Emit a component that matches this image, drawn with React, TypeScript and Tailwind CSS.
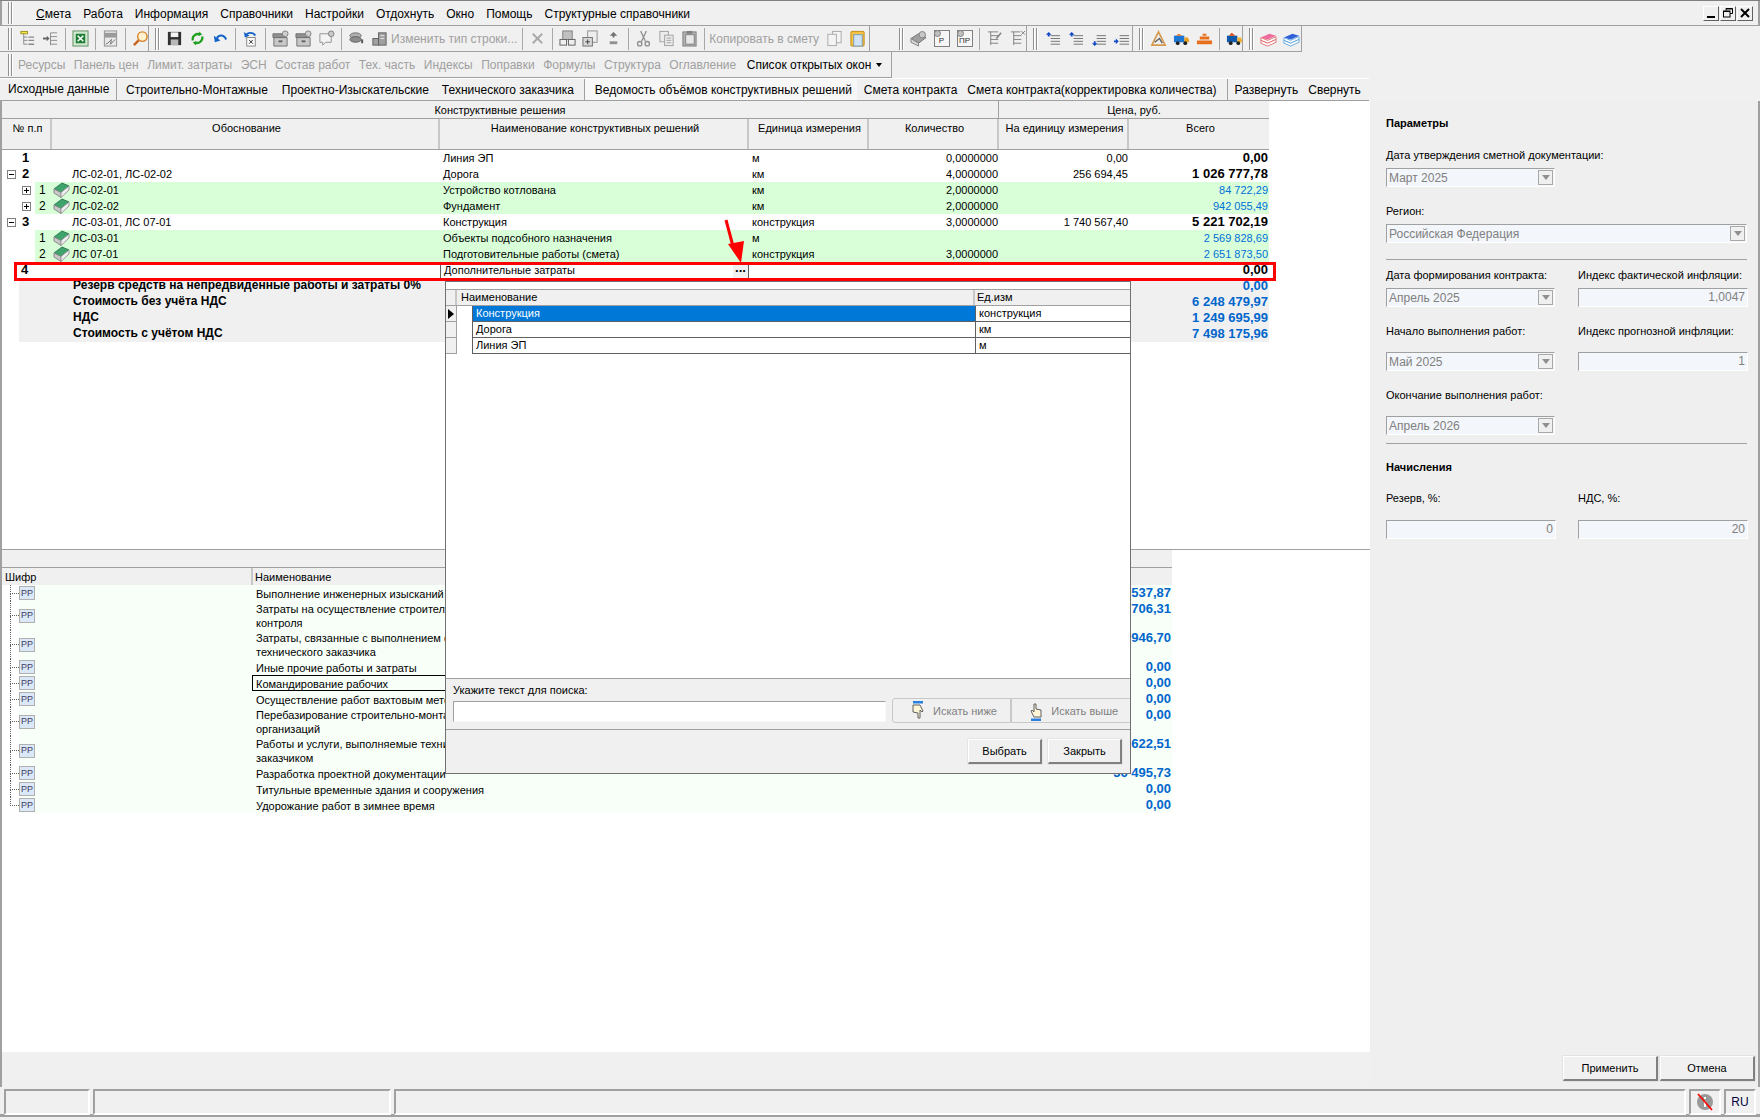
import type { ReactNode } from "react";

const COLS = "grid grid-cols-[50px_388px_309px_120px_130px_130px_140px]";

function Grip() {
  return (
    <div className="flex gap-[1px] ml-[6px] mr-[3px] shrink-0 h-[22px]">
      <div className="w-[2px] border-l border-[#909090] border-r border-r-white" />
      <div className="w-[2px] border-l border-[#909090] border-r border-r-white" />
    </div>
  );
}

function Sep() {
  return <div className="w-px h-[22px] bg-[#a8a8a8] mx-[3px] shrink-0" />;
}

function Ico({ children, w = "w-[23px]" }: { children: ReactNode; w?: string }) {
  return (
    <div className={`${w} h-[24px] flex items-center justify-center shrink-0`}>
      <svg width="17" height="17" viewBox="0 0 18 18">
        {children}
      </svg>
    </div>
  );
}

const TreeA = (
  <g fill="none" stroke="#8a8a8a">
    <rect x="2" y="1.5" width="7" height="2.5" fill="#f5e642" stroke="#a09020" />
    <path d="M5 4v11M5 7.5h4M5 11h4M5 15h4" />
    <path d="M10 7.5h6M10 11h6M10 15h6" strokeWidth="1.5" />
  </g>
);
const TreeB = (
  <g fill="none" stroke="#8a8a8a">
    <path d="M1 9h5" stroke="#606060" strokeWidth="2" />
    <path d="M5 6l3 3-3 3" fill="#606060" stroke="none" />
    <path d="M9 3v13M9 3h7M9 7h7M9 11h7M9 15h7" />
  </g>
);
const Excel = (
  <g>
    <rect x="1" y="1" width="16" height="16" fill="#cfe8cf" stroke="#5f8f5f" />
    <rect x="4" y="4" width="10" height="10" fill="#1e7e34" />
    <path d="M6 6l6 6M12 6l-6 6" stroke="#fff" strokeWidth="1.6" />
  </g>
);
const Pdf = (
  <g>
    <rect x="2.5" y="1" width="13" height="16" fill="#e8e8e8" stroke="#909090" />
    <rect x="2.5" y="3" width="13" height="5" fill="#9a9a9a" />
    <path d="M4 15c3-1 5-4 6-5l-1 5 5-5" stroke="#707070" fill="none" />
  </g>
);
const Find = (
  <g>
    <circle cx="11" cy="7" r="5" fill="#fff2cc" stroke="#d9822b" strokeWidth="1.5" />
    <path d="M7 11l-5 5" stroke="#c9641c" strokeWidth="2.5" />
  </g>
);
const Save = (
  <g>
    <rect x="2" y="2" width="14" height="14" fill="#303030" />
    <rect x="5" y="2.5" width="8" height="5" fill="#f4f4f4" />
    <rect x="5" y="10" width="8" height="6" fill="#b8b8b8" />
  </g>
);
const Refresh = (
  <g fill="none" stroke="#22a022" strokeWidth="2.4">
    <path d="M4 11a5.5 5.5 0 0 1 8-6" />
    <path d="M14 7a5.5 5.5 0 0 1-8 6" />
    <path d="M11 1.5l3 3.5-4 1z" fill="#22a022" stroke="none" />
    <path d="M7 16.5l-3-3.5 4-1z" fill="#22a022" stroke="none" />
  </g>
);
const Undo = (
  <g>
    <path d="M5 10c1-5 7-6 10 0" fill="none" stroke="#1464c8" strokeWidth="2.2" />
    <path d="M2 6l1 7 6-2z" fill="#1464c8" />
  </g>
);
const Undo2 = (
  <g>
    <path d="M4 6c2-4 8-4 10 0" fill="none" stroke="#1464c8" strokeWidth="2" />
    <path d="M2 2l1 6 5-2z" fill="#1464c8" />
    <rect x="5" y="8" width="9" height="9" fill="#fff" stroke="#808080" />
    <path d="M7.5 10.5l4 4M11.5 10.5l-4 4" stroke="#202020" />
  </g>
);
const Box = (
  <g>
    <path d="M2 8h14v9H2z" fill="#c8c8c8" stroke="#707070" />
    <path d="M1 4h12v4H1z" fill="#909090" stroke="#707070" />
    <circle cx="14" cy="4" r="3" fill="#d0d0d0" stroke="#808080" />
    <path d="M7 11h4v2H7z" fill="#606060" />
  </g>
);
const Bubble = (
  <g>
    <path d="M2 4h12v9H8l-3 3v-3H2z" fill="#f4f4f4" stroke="#909090" />
    <circle cx="14" cy="4" r="3" fill="#c8c8c8" stroke="#808080" />
  </g>
);
const Stack = (
  <g>
    <ellipse cx="8" cy="6" rx="6" ry="3" fill="#b0b0b0" stroke="#707070" />
    <ellipse cx="8" cy="10" rx="6" ry="3" fill="#8c8c8c" stroke="#606060" />
    <path d="M15 10v4" stroke="#505050" strokeWidth="2" />
  </g>
);
const Blocks = (
  <g fill="#a0a0a0" stroke="#606060">
    <rect x="2" y="9" width="6" height="7" />
    <rect x="8" y="3" width="8" height="13" />
    <path d="M10 6h4M10 9h4" stroke="#e8e8e8" />
  </g>
);
const Cross = <path d="M4 4l10 10M14 4L4 14" stroke="#a8a8a8" strokeWidth="2" />;
const Calc = (
  <g>
    <rect x="4" y="1" width="10" height="9" fill="#c0c0c0" stroke="#808080" />
    <rect x="1" y="10" width="7" height="6" fill="#f0f0f0" stroke="#606060" />
    <rect x="10" y="10" width="7" height="6" fill="#f0f0f0" stroke="#606060" />
  </g>
);
const DocPlus = (
  <g>
    <rect x="6" y="1" width="10" height="12" fill="#eee" stroke="#909090" />
    <rect x="1" y="8" width="10" height="9" fill="#d8d8d8" stroke="#707070" />
    <path d="M3.5 12.5h5M6 10v5" stroke="#404040" />
  </g>
);
const UpDown = (
  <g fill="#707070">
    <path d="M9 2l4 4h-3v2H8V6H5z" />
    <rect x="5" y="12" width="8" height="3" fill="#909090" />
  </g>
);
const Scissors = (
  <g fill="none" stroke="#909090" strokeWidth="1.4">
    <path d="M6 1l5 11M12 1L7 12" />
    <circle cx="5" cy="14.5" r="2.3" />
    <circle cx="13" cy="14.5" r="2.3" />
  </g>
);
const Copy = (
  <g fill="#ececec" stroke="#a0a0a0">
    <rect x="2" y="1.5" width="9" height="11" />
    <rect x="7" y="5.5" width="9" height="11" />
    <path d="M9 8.5h5M9 11h5M9 13.5h5" />
  </g>
);
const Paste = (
  <g>
    <rect x="2" y="2" width="14" height="15" fill="#b0b0b0" stroke="#808080" />
    <rect x="6" y="1" width="6" height="3" fill="#808080" />
    <rect x="5" y="5" width="9" height="10" fill="#e8e8e8" stroke="#808080" />
  </g>
);
const CopyPlain = (
  <g fill="#f4f4f4" stroke="#a8a8a8">
    <rect x="7" y="1.5" width="9" height="12" />
    <rect x="2" y="4.5" width="9" height="12" />
  </g>
);
const PasteGold = (
  <g>
    <rect x="2" y="1.5" width="14" height="15.5" rx="1" fill="#f5c242" stroke="#c08a10" />
    <rect x="5" y="5" width="9" height="12" fill="#cfe3f5" stroke="#7a9abc" />
  </g>
);
const GearBook = (
  <g>
    <path d="M1 9l8-5 8 4-8 6z" fill="#a0a0a0" stroke="#707070" />
    <path d="M1 9v4l8 4v-3z" fill="#d8d8d8" stroke="#808080" />
    <circle cx="13" cy="5" r="3.4" fill="#c8c8c8" stroke="#808080" />
  </g>
);
function BoxP({ t }: { t: string }) {
  return (
    <div className="w-[23px] h-[24px] flex items-center justify-center shrink-0">
      <div className="relative w-[16px] h-[17px] border border-[#808080] bg-[#f6f6f6] flex items-end justify-center">
        <div className="absolute -top-[1px] -left-[1px] w-[7px] h-[7px] rounded-full bg-[#c0c0c0] border border-[#808080]" />
        <span className="text-[8px] leading-[10px] text-[#303030]">{t}</span>
      </div>
    </div>
  );
}
const ListEdit = (
  <g fill="none" stroke="#808080">
    <path d="M2 2h11M5 2v14M5 6h8M5 10h8M5 14h8" />
    <path d="M11 9l5-6" strokeWidth="1.6" />
  </g>
);
const ListX = (
  <g fill="none" stroke="#808080">
    <path d="M2 2h10M5 2v14M5 6h8M5 10h8M5 14h8" />
    <path d="M13 1l4 4M17 1l-4 4" />
  </g>
);
function Lines({ arrow }: { arrow: string }) {
  return (
    <g>
      <path d="M7 6h10M7 9h10M7 12h10M7 15h10" stroke="#707070" />
      <path d={arrow} fill="#1248c8" />
    </g>
  );
}
const Compass = (
  <g fill="none">
    <path d="M2 16L9 2l7 14z" stroke="#d49a50" strokeWidth="1.8" />
    <path d="M5 13l5-4 3 5" stroke="#606060" strokeWidth="1.5" />
  </g>
);
const TruckBlue = (
  <g>
    <rect x="1" y="6" width="11" height="7" fill="#1c78d4" />
    <path d="M12 8h4l1 3v2h-5z" fill="#e8a020" />
    <circle cx="5" cy="14" r="2" fill="#202020" />
    <circle cx="13" cy="14" r="2" fill="#202020" />
    <path d="M3 6l3-2 4 2z" fill="#e8701c" />
  </g>
);
const Bricks = (
  <g fill="#e8701c">
    <path d="M1 11h16v4H1zM4 7h10v3H4zM7 4h4v2H7z" />
  </g>
);
const TruckOrange = (
  <g>
    <rect x="1" y="6" width="11" height="7" fill="#1058a8" />
    <path d="M12 8h4l1 3v2h-5z" fill="#f0b030" />
    <circle cx="5" cy="14" r="2" fill="#202020" />
    <circle cx="13" cy="14" r="2" fill="#202020" />
    <path d="M3 6l3-3 4 3z" fill="#e05010" />
  </g>
);
function Books({ a, b }: { a: string; b: string }) {
  return (
    <g>
      <path d="M1 8l9-4 7 2-9 4z" fill={a} />
      <path d="M1 8v3l7 3 9-4V7l-9 4z" fill="#fff" stroke={b} />
      <path d="M1 11v3l7 3 9-4v-3l-9 4z" fill="#fff" stroke={b} />
    </g>
  );
}

function BookIcon() {
  return (
    <svg width="17" height="16" viewBox="0 0 16 16" className="shrink-0">
      <path d="M0.5 7l8-6 7 3-8 6.5z" fill="#3fa36c" stroke="#2c7f52" />
      <path d="M0.5 7v4l7 4.5v-5z" fill="#c8c8c8" stroke="#8a8a8a" />
      <path d="M7.5 10.5l8-6.5v4l-8 7.5z" fill="#eeeeee" stroke="#9a9a9a" />
    </svg>
  );
}

function Expand({ open }: { open: boolean }) {
  return (
    <div className="w-[9px] h-[9px] border border-[#808080] bg-white flex items-center justify-center relative shrink-0">
      <div className="w-[5px] h-px bg-black" />
      {!open && <div className="absolute w-px h-[5px] bg-black" />}
    </div>
  );
}

type Row = {
  no: string;
  sub?: boolean;
  box?: "open" | "closed";
  just?: string;
  name: string;
  unit?: string;
  qty?: string;
  price?: string;
  total: string;
};

const rows: Row[] = [
  { no: "1", name: "Линия ЭП", unit: "м", qty: "0,0000000", price: "0,00", total: "0,00" },
  { no: "2", box: "open", just: "ЛС-02-01, ЛС-02-02", name: "Дорога", unit: "км", qty: "4,0000000", price: "256 694,45", total: "1 026 777,78" },
  { no: "1", sub: true, box: "closed", just: "ЛС-02-01", name: "Устройство котлована", unit: "км", qty: "2,0000000", total: "84 722,29" },
  { no: "2", sub: true, box: "closed", just: "ЛС-02-02", name: "Фундамент", unit: "км", qty: "2,0000000", total: "942 055,49" },
  { no: "3", box: "open", just: "ЛС-03-01, ЛС 07-01", name: "Конструкция", unit: "конструкция", qty: "3,0000000", price: "1 740 567,40", total: "5 221 702,19" },
  { no: "1", sub: true, just: "ЛС-03-01", name: "Объекты подсобного назначения", unit: "м", total: "2 569 828,69" },
  { no: "2", sub: true, just: "ЛС 07-01", name: "Подготовительные работы (смета)", unit: "конструкция", qty: "3,0000000", total: "2 651 873,50" },
];

const summary = [
  ["Резерв средств на непредвиденные работы и затраты 0%", "0,00"],
  ["Стоимость без учёта НДС", "6 248 479,97"],
  ["НДС", "1 249 695,99"],
  ["Стоимость с учётом НДС", "7 498 175,96"],
];

const works = [
  { t: ["Выполнение инженерных изысканий"], v: "537,87" },
  { t: ["Затраты на осуществление строительного", "контроля"], v: "706,31" },
  { t: ["Затраты, связанные с выполнением функций", "технического заказчика"], v: "946,70" },
  { t: ["Иные прочие работы и затраты"], v: "0,00" },
  { t: ["Командирование рабочих"], v: "0,00", focus: true },
  { t: ["Осуществление работ вахтовым методом"], v: "0,00" },
  { t: ["Перебазирование строительно-монтажных", "организаций"], v: "0,00" },
  { t: ["Работы и услуги, выполняемые техническим", "заказчиком"], v: "622,51" },
  { t: ["Разработка проектной документации"], v: "36 495,73" },
  { t: ["Титульные временные здания и сооружения"], v: "0,00" },
  { t: ["Удорожание работ в зимнее время"], v: "0,00" },
];

function ColHead({ children, last }: { children: ReactNode; last?: boolean }) {
  return (
    <div className={`h-full text-center pt-[2px] pl-[3px] whitespace-nowrap ${last ? "" : "border-r-2 border-r-[#c8c8c8]"}`}>{children}</div>
  );
}

function TopGrid() {
  return (
    <div className="h-[449px] flex flex-col bg-white border-b border-[#a0a0a0] shrink-0">
      <div className="w-[1267px] bg-[#f0f0f0] shrink-0">
        <div className="flex h-[18px] border-b border-[#a0a0a0] leading-[19px]">
          <div className="w-[997px] text-center border-r border-[#a0a0a0]">Конструктивные решения</div>
          <div className="w-[270px] text-center">Цена, руб.</div>
        </div>
        <div className={`${COLS} h-[31px] border-b border-[#a0a0a0] leading-[15px]`}>
          <ColHead>№ п.п</ColHead>
          <ColHead>Обоснование</ColHead>
          <ColHead>Наименование конструктивных решений</ColHead>
          <ColHead>Единица измерения</ColHead>
          <ColHead>Количество</ColHead>
          <ColHead>На единицу измерения</ColHead>
          <ColHead last>Всего</ColHead>
        </div>
      </div>
      <div className="w-[1267px] shrink-0">
        {rows.map((r, i) => {
          const bg = r.sub ? "bg-[#d9ffd9]" : "bg-white";
          return (
            <div key={i} className={`${COLS} h-[16px] leading-[16px]`}>
              <div className="flex items-center h-[16px]">
                {r.sub ? (
                  <>
                    <div className="w-[33px] h-full bg-white flex items-center pl-[20px]">
                      {r.box && <Expand open={false} />}
                    </div>
                    <div className={`flex-1 h-full pl-[4px] text-[12px] ${bg}`}>{r.no}</div>
                  </>
                ) : (
                  <>
                    <div className="w-[20px] flex items-center pl-[5px]">
                      {r.box && <Expand open />}
                    </div>
                    <div className="font-bold text-[13px]">{r.no}</div>
                  </>
                )}
              </div>
              <div className={`flex items-center ${bg}`}>
                <div className="w-[20px] pl-[1px] flex">{r.sub && <BookIcon />}</div>
                <span>{r.just}</span>
              </div>
              <div className={`pl-[3px] ${bg}`}>{r.name}</div>
              <div className={`pl-[3px] ${bg}`}>{r.unit}</div>
              <div className={`pr-[1px] text-right ${bg}`}>{r.qty}</div>
              <div className={`pr-[1px] text-right ${bg}`}>{r.price}</div>
              <div className={`pr-[1px] text-right ${bg} ${r.sub ? "text-[#0070d8]" : "font-bold text-[13px]"}`}>{r.total}</div>
            </div>
          );
        })}
        <div className={`${COLS} h-[16px] leading-[16px]`}>
          <div className="pl-[19px] font-bold text-[13px]">4</div>
          <div />
          <div className="pl-[3px] flex justify-between border-l border-[#606060] border-r">
            <span>Дополнительные затраты</span>
            <span className="w-[15px] bg-[#f0f0f0] text-center font-bold leading-[12px] text-[13px]">...</span>
          </div>
          <div />
          <div />
          <div />
          <div className="pr-[1px] text-right font-bold text-[13px]">0,00</div>
        </div>
        {summary.map((s) => (
          <div key={s[0]} className="flex justify-between h-[16px] leading-[15px] ml-[17px] bg-[#f0f0f0] font-bold text-[12px] pl-[54px] pr-[1px]">
            <span>{s[0]}</span>
            <span className="text-[#0066cc] text-[13px]">{s[1]}</span>
          </div>
        ))}
      </div>
    </div>
  );
}

function BottomGrid() {
  return (
    <div className="flex-1 bg-white">
      <div className="w-[1170px] bg-[#f0f0f0]">
        <div className="h-[18px] border-b border-[#a0a0a0]" />
        <div className="h-[17px] flex leading-[18px]">
          <div className="w-[251px] pl-[3px] border-r-2 border-r-[#c8c8c8]">Шифр</div>
          <div className="pl-[2px]">Наименование</div>
        </div>
      </div>
      <div className="w-[1170px]">
        {works.map((w, i) => (
          <div key={i} className={`flex ${w.t.length > 1 ? "h-[29px]" : "h-[16px]"}`}>
            <div className="w-[17px] flex flex-col pl-[8px] shrink-0">
              <div className="flex-1 border-l border-b border-dotted border-[#606060]" />
              <div className={`flex-1 ${i < works.length - 1 ? "border-l border-dotted border-[#606060]" : ""}`} />
            </div>
            <div className="flex-1 flex bg-[#f8fff8]">
              <div className="w-[234px] flex items-center shrink-0">
                <div className="w-[16px] h-[14px] bg-[#dbe8f8] border border-[#b0b0b0] flex items-center justify-center text-[9px] leading-[9px] text-[#404060]">
                  РР
                </div>
              </div>
              <div className={`w-[860px] shrink-0 flex flex-col justify-center leading-[14px] pl-[3px] ${w.t.length > 1 ? "" : "pt-[2px]"} ${w.focus ? "border border-black -ml-[1px] pl-[3px] pt-[1px]" : ""}`}>
                {w.t.map((l) => (
                  <div key={l}>{l}</div>
                ))}
              </div>
              <div className="flex-1 flex items-start justify-end pr-[1px] text-[#0066cc] font-bold text-[13px] leading-[16px] whitespace-nowrap">{w.v}</div>
            </div>
          </div>
        ))}
      </div>
    </div>
  );
}

function Combo({ v, wide }: { v: string; wide?: boolean }) {
  return (
    <div className={`${wide ? "w-[361px]" : "w-[169px]"} h-[19px] flex items-center justify-between bg-[#f3f6fb] border-t border-l border-[#a0a0a0] border-b border-r border-b-white border-r-white pl-[2px] pr-[1px] text-[#808080] text-[12px]`}>
      <span>{v}</span>
      <span className="w-[15px] h-[15px] bg-[#f0f0f0] border border-[#a8a8a8] flex items-center justify-center">
        <span className="border-t-[5px] border-t-[#909090] border-x-[4px] border-x-transparent" />
      </span>
    </div>
  );
}

function Field({ v }: { v: string }) {
  return (
    <div className="w-[170px] h-[19px] text-right leading-[17px] bg-[#f3f6fb] border-t border-l border-[#a0a0a0] border-b border-r border-b-white border-r-white pr-[2px] text-[#808080] text-[12px]">
      {v}
    </div>
  );
}

function Btn({ t, cls }: { t: string; cls: string }) {
  return (
    <div className={`${cls} h-[25px] bg-[#f0f0f0] flex items-center justify-center border-t border-l border-white border-r-2 border-b-2 border-r-[#808080] border-b-[#808080] shadow-[0_0_0_0.5px_#d8d8d8]`}>
      {t}
    </div>
  );
}

function Params() {
  const two = "grid grid-cols-[169px_170px] gap-x-[23px]";
  return (
    <div className="w-[388px] flex flex-col pl-[16px] leading-[16px] bg-[#efefef]">
      <div className="mt-[14px] font-bold">Параметры</div>
      <div className="mt-[16px]">Дата утверждения сметной документации:</div>
      <div className="mt-[5px]"><Combo v="Март 2025" /></div>
      <div className="mt-[16px]">Регион:</div>
      <div className="mt-[5px]"><Combo v="Российская Федерация" wide /></div>
      <div className="mt-[16px] h-px w-[361px] bg-[#a0a0a0]" />
      <div className={`mt-[7px] ${two}`}>
        <div className="whitespace-nowrap">Дата формирования контракта:</div>
        <div className="whitespace-nowrap">Индекс фактической инфляции:</div>
      </div>
      <div className={`mt-[5px] ${two}`}>
        <Combo v="Апрель 2025" />
        <Field v="1,0047" />
      </div>
      <div className={`mt-[16px] ${two}`}>
        <div>Начало выполнения работ:</div>
        <div className="whitespace-nowrap">Индекс прогнозной инфляции:</div>
      </div>
      <div className={`mt-[13px] ${two}`}>
        <Combo v="Май 2025" />
        <Field v="1" />
      </div>
      <div className="mt-[16px]">Окончание выполнения работ:</div>
      <div className="mt-[13px]"><Combo v="Апрель 2026" /></div>
      <div className="mt-[8px] h-px w-[361px] bg-[#a0a0a0]" />
      <div className="mt-[15px] font-bold">Начисления</div>
      <div className={`mt-[15px] ${two}`}>
        <div>Резерв, %:</div>
        <div>НДС, %:</div>
      </div>
      <div className={`mt-[14px] ${two}`}>
        <Field v="0" />
        <Field v="20" />
      </div>
      <div className="mt-auto mb-[6px] flex justify-end gap-[2px] pr-[3px]">
        <Btn t="Применить" cls="w-[95px]" />
        <Btn t="Отмена" cls="w-[95px]" />
      </div>
    </div>
  );
}

function Hand({ up }: { up?: boolean }) {
  return (
    <svg width="16" height="20" viewBox="0 0 16 20" className="mr-[7px]">
      <g transform={up ? undefined : "rotate(180 8 10)"}>
        <path d="M6 3v8l-2-2-1 1 3 6h7v-7l-5-1V3z" fill="#fff6d8" stroke="#606060" />
        <rect x="3" y="17.5" width="10" height="2.5" fill="#2a80e0" />
      </g>
    </svg>
  );
}

function Dialog() {
  return (
    <div className="absolute left-[445px] top-[280px] w-[686px] h-[493px] bg-[#f0f0f0] border border-[#707070] flex flex-col">
      <div className="flex-1 bg-white flex flex-col">
        <div className="h-[7px]" />
        <div className="flex h-[17px] bg-[#f0f0f0] border-y border-[#a0a0a0] leading-[14px] shrink-0">
          <div className="w-[11px] border-r-2 border-r-[#c8c8c8]" />
          <div className="w-[518px] pl-[4px] border-r-2 border-r-[#c8c8c8]">Наименование</div>
          <div className="pl-[2px]">Ед.изм</div>
        </div>
        {["Конструкция", "Дорога", "Линия ЭП"].map((n, i) => (
          <div key={n} className="flex h-[16px] leading-[15px] shrink-0">
            <div className="w-[11px] bg-[#f0f0f0] border-b border-r border-[#a0a0a0] flex items-center justify-center">
              {i === 0 && <span className="border-l-[6px] border-l-black border-y-[5px] border-y-transparent" />}
            </div>
            <div className="w-[15px]" />
            <div className={`w-[503px] pl-[3px] border-l border-b border-[#606060] ${i === 0 ? "bg-[#0078d7] text-white" : ""}`}>{n}</div>
            <div className="flex-1 pl-[3px] border-l border-b border-[#606060]">{i === 0 ? "конструкция" : i === 1 ? "км" : "м"}</div>
          </div>
        ))}
      </div>
      <div className="h-[52px] border-y border-[#a0a0a0] pl-[7px] shrink-0 leading-[16px]">
        <div className="mt-[3px]">Укажите текст для поиска:</div>
        <div className="flex items-end">
          <div className="w-[434px] h-[21px] bg-white border-t border-l border-[#a0a0a0] border-b border-r border-b-[#f8f8f8] border-r-[#f8f8f8]" />
          <div className="ml-[6px] w-[120px] h-[25px] -mb-[1px] rounded-l-[3px] border border-[#c8c8c8] flex items-center justify-center pl-[4px] text-[#808080]">
            <Hand />
            Искать ниже
          </div>
          <div className="w-[119px] h-[25px] -mb-[1px] border-y border-l border-[#c8c8c8] flex items-center justify-center pl-[4px] text-[#808080]">
            <Hand up />
            Искать выше
          </div>
        </div>
      </div>
      <div className="h-[43px] shrink-0 flex justify-end items-start pt-[9px] pr-[8px] gap-[6px]">
        <Btn t="Выбрать" cls="w-[74px]" />
        <Btn t="Закрыть" cls="w-[74px]" />
      </div>
    </div>
  );
}

function StatusBox({ cls, children }: { cls: string; children?: ReactNode }) {
  return (
    <div className={`${cls} h-[26px] mt-[2px] border-t-2 border-l-2 border-[#a0a0a0] border-b-2 border-r-2 border-b-white border-r-white flex items-center justify-center`}>
      {children}
    </div>
  );
}

const group = "flex items-center h-[26px] border-b border-r border-[#a0a0a0]";
const TOOL_TEXT = ["Ресурсы", "Панель цен", "Лимит. затраты", "ЭСН", "Состав работ", "Тех. часть", "Индексы", "Поправки", "Формулы", "Структура", "Оглавление"];
const MENU = ["Работа", "Информация", "Справочники", "Настройки", "Отдохнуть", "Окно", "Помощь", "Структурные справочники"];

export default function App() {
  return (
    <div className="relative w-[1760px] h-[1120px] overflow-hidden bg-[#f0f0f0] text-black text-[11px] font-['Liberation_Sans',sans-serif] border-t border-[#808080]">
      {/* menu */}
      <div className="flex items-center h-[25px] border-b border-[#a0a0a0] border-x-2 border-x-[#a0a0a0]">
        <Grip />
        <div className="flex gap-[12px] ml-[20px] mt-[2px] text-[12px]">
          <span>
            <span className="underline">С</span>мета
          </span>
          {MENU.map((m) => (
            <span key={m}>{m}</span>
          ))}
        </div>
        <div className="ml-auto mr-[5px] flex gap-px">
          {["min", "max", "close"].map((k) => (
            <div key={k} className="w-[16px] h-[15px] bg-[#f0f0f0] border border-white border-r-[#606060] border-b-[#606060] flex items-center justify-center">
              {k === "min" && <div className="w-[8px] h-[2px] bg-black mt-[8px]" />}
              {k === "max" && (
                <svg width="10" height="10" viewBox="0 0 10 10" fill="none" stroke="#000">
                  <path d="M3 2.5V.5h6.5v5H7" />
                  <rect x=".5" y="3" width="6.5" height="6" />
                  <path d="M0 3.5h7M3 1h6" />
                </svg>
              )}
              {k === "close" && (
                <svg width="10" height="10" viewBox="0 0 10 10" stroke="#000" strokeWidth="2">
                  <path d="M1 1l8 8M9 1L1 9" />
                </svg>
              )}
            </div>
          ))}
        </div>
      </div>

      {/* toolbar 1 */}
      <div className="flex h-[26px]">
        <div className={`${group} pl-[2px] w-[149px]`}>
          <Grip />
          <Ico>{TreeA}</Ico>
          <Ico>{TreeB}</Ico>
          <Sep />
          <Ico>{Excel}</Ico>
          <Sep />
          <Ico>{Pdf}</Ico>
          <Sep />
          <Ico>{Find}</Ico>
        </div>
        <div className={`${group} w-[721px]`}>
          <Grip />
          <Ico>{Save}</Ico>
          <Ico>{Refresh}</Ico>
          <Ico>{Undo}</Ico>
          <Sep />
          <Ico>{Undo2}</Ico>
          <Sep />
          <Ico>{Box}</Ico>
          <Ico>{Box}</Ico>
          <Ico>{Bubble}</Ico>
          <Sep />
          <Ico>{Stack}</Ico>
          <Ico>{Blocks}</Ico>
          <span className="text-[#a0a0a0] text-[12px] whitespace-nowrap">Изменить тип строки...</span>
          <div className="ml-[2px]"><Sep /></div>
          <Ico>{Cross}</Ico>
          <Sep />
          <Ico>{Calc}</Ico>
          <Ico>{DocPlus}</Ico>
          <Ico>{UpDown}</Ico>
          <Sep />
          <Ico>{Scissors}</Ico>
          <Ico>{Copy}</Ico>
          <Ico>{Paste}</Ico>
          <Sep />
          <span className="text-[#a0a0a0] text-[12px] ml-[1px] whitespace-nowrap">Копировать в смету</span>
          <div className="ml-[4px] flex">
            <Ico>{CopyPlain}</Ico>
            <Ico>{PasteGold}</Ico>
          </div>
        </div>
        <div className="w-[23px] border-b border-[#a0a0a0]" />
        <div className={`${group} w-[134px]`}>
          <Grip />
          <Ico>{GearBook}</Ico>
          <BoxP t="Р" />
          <BoxP t="ПР" />
          <Sep />
          <Ico>{ListEdit}</Ico>
          <Ico>{ListX}</Ico>
        </div>
        <div className={`${group} w-[106px]`}>
          <Grip />
          <Ico><Lines arrow="M5 2l3 3H6v2H4V5H2z" /></Ico>
          <Ico><Lines arrow="M5 2l3 3H6v2H4V5H2z" /></Ico>
          <Ico><Lines arrow="M5 17l3-3H6v-2H4v2H2z" /></Ico>
          <Ico><Lines arrow="M6 12l-3 3v-2H1v-2h2V9z" /></Ico>
        </div>
        <div className={`${group} w-[110px]`}>
          <Grip />
          <Ico>{Compass}</Ico>
          <Ico>{TruckBlue}</Ico>
          <Ico>{Bricks}</Ico>
          <Sep />
          <Ico>{TruckOrange}</Ico>
        </div>
        <div className={`${group} w-[59px]`}>
          <Grip />
          <Ico><Books a="#f06aa0" b="#e07070" /></Ico>
          <Ico><Books a="#3060d8" b="#60a8e0" /></Ico>
        </div>
      </div>

      {/* toolbar 2 */}
      <div className={`${group} w-[892px] pl-[2px]`}>
        <Grip />
        <div className="flex gap-[8.5px] text-[12px] text-[#a0a0a0] ml-[2px] whitespace-nowrap">
          {TOOL_TEXT.map((t) => (
            <span key={t}>{t}</span>
          ))}
          <span className="text-black ml-[2px]">Список открытых окон</span>
        </div>
        <span className="ml-[5px] border-t-[4px] border-t-black border-x-[3px] border-x-transparent" />
      </div>

      {/* tabs */}
      <div className="h-[23px] flex items-center border-t border-t-white border-b border-[#a0a0a0] text-[12px] whitespace-nowrap w-[1369px]">
        <span className="ml-[8px] w-[109px] border-r border-[#a0a0a0] leading-[21px]">Исходные данные</span>
        <span className="ml-[9px]">Строительно-Монтажные</span>
        <span className="ml-[14px]">Проектно-Изыскательские</span>
        <span className="ml-[13px]">Технического заказчика</span>
        <span className="ml-[10px] h-[21px] w-[273px] pl-[10px] bg-[#f7f7f7] border-l border-[#a0a0a0] leading-[22px]">Ведомость объёмов конструктивных решений</span>
        <span className="ml-[7px]">Смета контракта</span>
        <span className="ml-[10px]">Смета контракта(корректировка количества)</span>
        <div className="ml-[10px] h-[21px] border-l border-[#a0a0a0]" />
        <span className="ml-[7px]">Развернуть</span>
        <span className="ml-[10px]">Свернуть</span>
      </div>

      {/* body */}
      <div className="flex h-[986px] border-r-2 border-[#a0a0a0]">
        <div className="w-[1370px] flex flex-col border-l-2 border-[#a0a0a0] shrink-0">
          <div className="h-[951px] flex flex-col bg-white">
            <TopGrid />
            <BottomGrid />
          </div>
        </div>
        <Params />
      </div>

      {/* status */}
      <div className="flex gap-[3px] pl-[4px] pr-[4px] h-[30px] border-b-[3px] border-[#a0a0a0]">
        <StatusBox cls="w-[86px]" />
        <StatusBox cls="w-[298px]" />
        <StatusBox cls="w-[1293px]" />
        <StatusBox cls="w-[32px]">
          <svg width="18" height="18" viewBox="0 0 18 18">
            <circle cx="9" cy="9" r="8" fill="#999" />
            <path d="M9 4v2M9 8v6" stroke="#fff" strokeWidth="2" />
            <path d="M2 1l14 16" stroke="#f00" strokeWidth="1.6" />
          </svg>
        </StatusBox>
        <StatusBox cls="w-[32px]">
          <span className="text-[#000040] text-[12px]">RU</span>
        </StatusBox>
      </div>

      {/* annotation */}
      <div className="absolute left-[14px] top-[261px] w-[1262px] h-[19px] border-[3px] border-[#f00]" />
      <Dialog />
      <svg className="absolute left-[715px] top-[215px]" width="40" height="50" viewBox="0 0 40 50">
        <path d="M11 4l8 30" stroke="#f00" strokeWidth="3" />
        <path d="M26 47L13 28l16-3z" fill="#f00" />
      </svg>
    </div>
  );
}
